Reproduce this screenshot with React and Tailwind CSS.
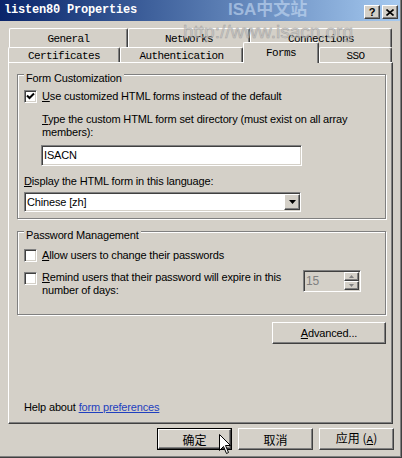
import React from "react";

const raised =
  "border border-t-white border-l-white border-b-[#404040] border-r-[#404040] shadow-[inset_-1px_-1px_0_#808080] bg-[#d4d0c8]";
const sunken =
  "border border-t-[#808080] border-l-[#808080] border-b-white border-r-white shadow-[inset_1px_1px_0_#404040,inset_-1px_-1px_0_#d4d0c8]";

function Checkbox({ checked }) {
  return (
    <div className={`w-[13px] h-[13px] shrink-0 bg-white flex items-center justify-center ${sunken}`}>
      {checked && (
        <svg width="9" height="9" viewBox="0 0 9 9">
          <path d="M1 3.5 L3.5 6 L8 1.5" stroke="#000" strokeWidth="2" fill="none" />
        </svg>
      )}
    </div>
  );
}

function Tab({ label, className }) {
  return (
    <div
      className={`rounded-t-[2px] border-t border-l border-white border-r border-r-[#404040] shadow-[inset_-1px_0_0_#808080] bg-[#d4d0c8] text-center leading-[13px] ${className}`}
    >
      {label}
    </div>
  );
}

function Button({ children, className, isDefault }) {
  if (isDefault) {
    return (
      <div className={`border border-black ${className}`}>
        <div className={`w-full h-full flex items-center justify-center ${raised}`}>{children}</div>
      </div>
    );
  }
  return <div className={`flex items-center justify-center ${raised} ${className}`}>{children}</div>;
}

export default function App() {
  return (
    <div className="relative w-[402px] h-[458px] overflow-hidden bg-[#d4d0c8] font-['Liberation_Sans',Arial,sans-serif] text-[11px] leading-[13px] tracking-[-0.15px] text-black shadow-[inset_-1px_-1px_0_#404040,inset_-2px_-2px_0_#808080]">
      {/* title bar */}
      <div className="flex h-[21px] w-[400px] items-center justify-between bg-linear-to-r from-[#0a246a] to-[#a6caf0] pl-[4px] pr-[2px]">
        <span className="font-['Liberation_Mono',monospace] text-[12px] font-bold tracking-[-0.2px] text-white">
          listen80 Properties
        </span>
        <div className="mt-[3px] flex gap-[2px]">
          <div className={`w-[16px] h-[14px] flex items-center justify-center text-[11px] font-bold leading-none ${raised}`}>
            ?
          </div>
          <div className={`w-[16px] h-[14px] flex items-center justify-center ${raised}`}>
            <svg width="8" height="7" viewBox="0 0 8 7">
              <path d="M0.5 0.5 L7.5 6.5 M7.5 0.5 L0.5 6.5" stroke="#000" strokeWidth="1.6" fill="none" />
            </svg>
          </div>
        </div>
      </div>

      {/* tabs */}
      <div className="mt-[7px] font-['Liberation_Mono',monospace] text-[11px] tracking-[-0.6px]">
        <div className="flex h-[19px] pl-[9px]">
          <Tab label="General" className="w-[119px] h-[19px] pt-[4px]" />
          <Tab label="Networks" className="w-[122px] h-[19px] pt-[4px]" />
          <Tab label="Connections" className="w-[142px] h-[19px] pt-[4px]" />
        </div>
        <div className="flex h-[15px] items-start pl-[8px]">
          <Tab label="Certificates" className="w-[112px] h-[15px] pt-[2px]" />
          <Tab label="Authentication" className="w-[123px] h-[15px] pt-[2px]" />
          <Tab label="Forms" className="relative z-10 -mt-[5px] w-[76px] h-[21px] pt-[4px]" />
          <Tab label="SSO" className="w-[73px] h-[15px] pt-[2px]" />
        </div>
      </div>

      {/* panel */}
      <div className="ml-[8px] flex h-[362px] w-[385px] flex-col border border-t-white border-l-white border-r-[#404040] border-b-[#404040] shadow-[inset_-1px_-1px_0_#808080] pl-[8px]">
        <fieldset className="mt-[1px] w-[369px] border border-[#808080] shadow-[inset_1px_1px_0_#fff,1px_1px_0_#fff] pl-[6px] pb-[6px]">
          <legend className="bg-[#d4d0c8] px-[2px] pt-[8px] leading-[13px]">Form Customization</legend>
          <div className="mt-[5px] flex h-[13px] items-center">
            <Checkbox checked />
            <span className="ml-[5px]">
              <u>U</u>se customized HTML forms instead of the default
            </span>
          </div>
          <div className="mt-[10px] ml-[18px]">
            <u>T</u>ype the custom HTML form set directory (must exist on all array
            <br />
            members):
          </div>
          <div className={`mt-[6px] ml-[17px] flex h-[21px] w-[261px] items-center bg-white pl-[2px] ${sunken}`}>
            ISACN
          </div>
          <div className="mt-[9px]">
            <u>D</u>isplay the HTML form in this language:
          </div>
          <div className={`mt-[4px] flex h-[20px] w-[277px] items-center bg-white ${sunken}`}>
            <span className="flex-1 pl-[2px]">Chinese [zh]</span>
            <div className={`flex h-[16px] w-[16px] items-center justify-center ${raised}`}>
              <svg width="7" height="4" viewBox="0 0 7 4">
                <path d="M0 0 H7 L3.5 4 Z" fill="#000" />
              </svg>
            </div>
          </div>
        </fieldset>

        <fieldset className="mt-[2px] w-[369px] border border-[#808080] shadow-[inset_1px_1px_0_#fff,1px_1px_0_#fff] pl-[6px] pb-[17px]">
          <legend className="bg-[#d4d0c8] px-[2px] pt-[8px] leading-[13px]">Password Management</legend>
          <div className="mt-[7px] flex h-[13px] items-center">
            <Checkbox />
            <span className="ml-[5px]">
              <u>A</u>llow users to change their passwords
            </span>
          </div>
          <div className="mt-[9px] flex items-start">
            <div className="mt-[1px]">
              <Checkbox />
            </div>
            <div className="ml-[5px] w-[252px]">
              <u>R</u>emind users that their password will expire in this
              <br />
              number of days:
            </div>
            <div className={`-mt-[1px] ml-[9px] flex h-[22px] w-[58px] items-center ${sunken}`}>
              <span className="flex-1 pl-[2px] text-[12px] text-[#808080]">15</span>
              <div className="mr-[1px] flex flex-col">
                <div className={`flex h-[9px] w-[15px] items-center justify-center ${raised}`}>
                  <svg width="5" height="3" viewBox="0 0 5 3">
                    <path d="M2.5 0 L5 3 H0 Z" fill="#808080" />
                  </svg>
                </div>
                <div className={`flex h-[9px] w-[15px] items-center justify-center ${raised}`}>
                  <svg width="5" height="3" viewBox="0 0 5 3">
                    <path d="M0 0 H5 L2.5 3 Z" fill="#808080" />
                  </svg>
                </div>
              </div>
            </div>
          </div>
        </fieldset>

        <Button className="mt-[7px] ml-[255px] h-[22px] w-[114px]">
          <span>
            <u>A</u>dvanced...
          </span>
        </Button>

        <div className="mt-auto mb-[9px] ml-[7px]">
          Help about{" "}
          <span className="text-[#1f3fbf] underline">form preferences</span>
        </div>
      </div>

      {/* dialog buttons */}
      <div className="mt-[4px] flex justify-end gap-[6px] pr-[8px] font-['Noto_Sans_CJK_SC',sans-serif] text-[12px] tracking-normal">
        <Button isDefault className="h-[22px] w-[75px]">确定</Button>
        <Button className="h-[22px] w-[75px]">取消</Button>
        <Button className="h-[22px] w-[75px]">
          <span>
            应用 (<u className="font-['Liberation_Mono',monospace] text-[11px]">A</u>)
          </span>
        </Button>
      </div>

      {/* watermark */}
      <span className="pointer-events-none absolute left-[228px] top-[0px] font-['Liberation_Sans','Noto_Sans_CJK_SC',sans-serif] text-[17px] font-bold leading-[20px] tracking-normal text-[#c8dcf4] opacity-60">
        ISA中文站
      </span>
      <span className="pointer-events-none absolute left-[183px] top-[21px] font-['Liberation_Sans',sans-serif] text-[19px] leading-[22px] tracking-normal text-[#c4c4c4] opacity-70 [-webkit-text-stroke:0.5px_#909090]">
        http://www.isacn.org
      </span>

      {/* mouse cursor */}
      <svg className="pointer-events-none absolute left-[219px] top-[434px]" width="13" height="21" viewBox="0 0 13 21">
        <path d="M0.5 0.5 L0.5 16.5 L4.5 12.5 L7.5 19.5 L9.5 18.5 L6.5 11.5 L11.5 11.5 Z" fill="#fff" stroke="#000" strokeWidth="1" />
      </svg>
    </div>
  );
}
